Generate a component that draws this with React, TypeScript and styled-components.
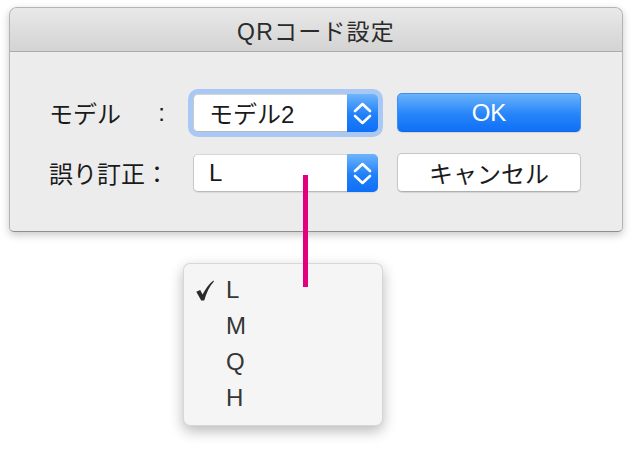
import styled, { createGlobalStyle } from "styled-components";

const GlobalStyle = createGlobalStyle`
  html, body {
    margin: 0;
    padding: 0;
    background: #ffffff;
  }
  body {
    font-family: "Liberation Sans", "Noto Sans CJK JP", sans-serif;
    color: #1b1b1b;
  }
`;

const Stage = styled.div`
  position: relative;
  width: 632px;
  height: 460px;
  padding: 7px 9px 0;
  box-sizing: border-box;
`;

const Window = styled.div`
  width: 614px;
  height: 225px;
  box-sizing: border-box;
  background: #ececec;
  border: 1px solid #b4b4b4;
  border-bottom-color: #8e8e8e;
  border-radius: 8px 8px 5px 5px;
  box-shadow: 0 3px 9px rgba(0, 0, 0, 0.22);
  overflow: hidden;
`;

const TitleBar = styled.div`
  height: 43px;
  display: flex;
  align-items: center;
  justify-content: center;
  background: linear-gradient(#e9e9e9, #d3d3d3);
  border-bottom: 1px solid #ababab;
  font-size: 23px;
  letter-spacing: 1.2px;
  color: #2b2b2b;
`;

const Form = styled.div`
  display: grid;
  grid-template-columns: 125px 185px 184px;
  column-gap: 19px;
  row-gap: 21px;
  padding: 41px 0 0 39px;
  align-items: center;
`;

const Label = styled.div`
  display: flex;
  align-items: center;
  width: 116px;
  white-space: nowrap;
  justify-content: ${({ $spread }) => ($spread ? "space-between" : "flex-start")};
  font-size: 24px;
  color: #1a1a1a;
`;

const SelectBox = styled.div`
  position: relative;
  display: flex;
  height: 38px;
  box-sizing: border-box;
  background: #ffffff;
  border: 1px solid #c9c9c9;
  border-top-color: #d6d6d6;
  border-bottom-color: #b9b9b9;
  border-radius: 5px;
  box-shadow: ${({ $focused }) =>
    $focused ? "0 0 0 5px #a9c9f4" : "0 1px 1px rgba(0, 0, 0, 0.08)"};
`;

const SelectValue = styled.div`
  flex: 1;
  display: flex;
  align-items: center;
  padding-left: 15px;
  font-size: 24px;
  color: #1a1a1a;
`;

const Stepper = styled.div`
  width: 31px;
  margin: -1px -1px -1px 0;
  border-radius: 0 5px 5px 0;
  background: linear-gradient(#6db4fb, #1f80f9 55%, #0f6ff6);
  display: flex;
  align-items: center;
  justify-content: center;
`;

const Button = styled.div`
  height: 39px;
  box-sizing: border-box;
  display: flex;
  align-items: center;
  justify-content: center;
  border-radius: 5px;
  font-size: 24px;
  background: ${({ $primary }) =>
    $primary ? "linear-gradient(#6ab2fb, #2685f9 55%, #106ff6)" : "#ffffff"};
  color: ${({ $primary }) => ($primary ? "#ffffff" : "#1a1a1a")};
  border: 1px solid ${({ $primary }) => ($primary ? "#3c8df5" : "#c6c6c6")};
  border-bottom-color: ${({ $primary }) => ($primary ? "#1567e0" : "#b0b0b0")};
  box-shadow: 0 1px 1px rgba(0, 0, 0, 0.1);
`;

const Marker = styled.div`
  position: absolute;
  left: 303px;
  top: 175px;
  width: 5px;
  height: 112px;
  background: #e3007f;
  z-index: 2;
`;

const Menu = styled.div`
  position: absolute;
  left: 183px;
  top: 263px;
  width: 200px;
  padding: 8px 0 9px;
  box-sizing: border-box;
  background: #f5f5f5;
  border-radius: 7px;
  border: 0.5px solid rgba(0, 0, 0, 0.12);
  box-shadow: 0 5px 14px rgba(0, 0, 0, 0.28);
`;

const MenuItem = styled.div`
  height: 36px;
  display: flex;
  align-items: center;
  font-size: 24px;
  color: #363636;
`;

const CheckSlot = styled.div`
  width: 42px;
  padding-left: 12px;
  box-sizing: border-box;
  display: flex;
  align-items: center;
`;

function Chevrons() {
  return (
    <svg width="31" height="38" viewBox="0 0 31 38">
      <path
        d="M8 17 L15.5 10 L23 17 M8 22 L15.5 29 L23 22"
        fill="none"
        stroke="#ffffff"
        strokeWidth="2.6"
        strokeLinecap="round"
        strokeLinejoin="round"
      />
    </svg>
  );
}

function Check() {
  return (
    <svg width="18" height="21" viewBox="0 0 18 21">
      <path
        d="M0.3 11.8 L4.2 10 L6.6 14.6 C9.2 9 12.6 4.4 17.4 0.4 L17.9 1.4 C13.6 6.2 10.4 12.4 8.2 20.6 L5.2 20.6 Z"
        fill="#2a2a2a"
      />
    </svg>
  );
}

const levels = ["L", "M", "Q", "H"];

export default function App() {
  return (
    <>
      <GlobalStyle />
      <Stage>
        <Window>
          <TitleBar>QRコード設定</TitleBar>
          <Form>
            <Label $spread>
              <span>モデル</span>
              <span>:</span>
            </Label>
            <SelectBox $focused>
              <SelectValue>モデル2</SelectValue>
              <Stepper>
                <Chevrons />
              </Stepper>
            </SelectBox>
            <Button $primary>OK</Button>

            <Label>誤り訂正：</Label>
            <SelectBox>
              <SelectValue>L</SelectValue>
              <Stepper>
                <Chevrons />
              </Stepper>
            </SelectBox>
            <Button>キャンセル</Button>
          </Form>
        </Window>

        <Marker />

        <Menu>
          {levels.map((level, i) => (
            <MenuItem key={level}>
              <CheckSlot>{i === 0 && <Check />}</CheckSlot>
              {level}
            </MenuItem>
          ))}
        </Menu>
      </Stage>
    </>
  );
}
